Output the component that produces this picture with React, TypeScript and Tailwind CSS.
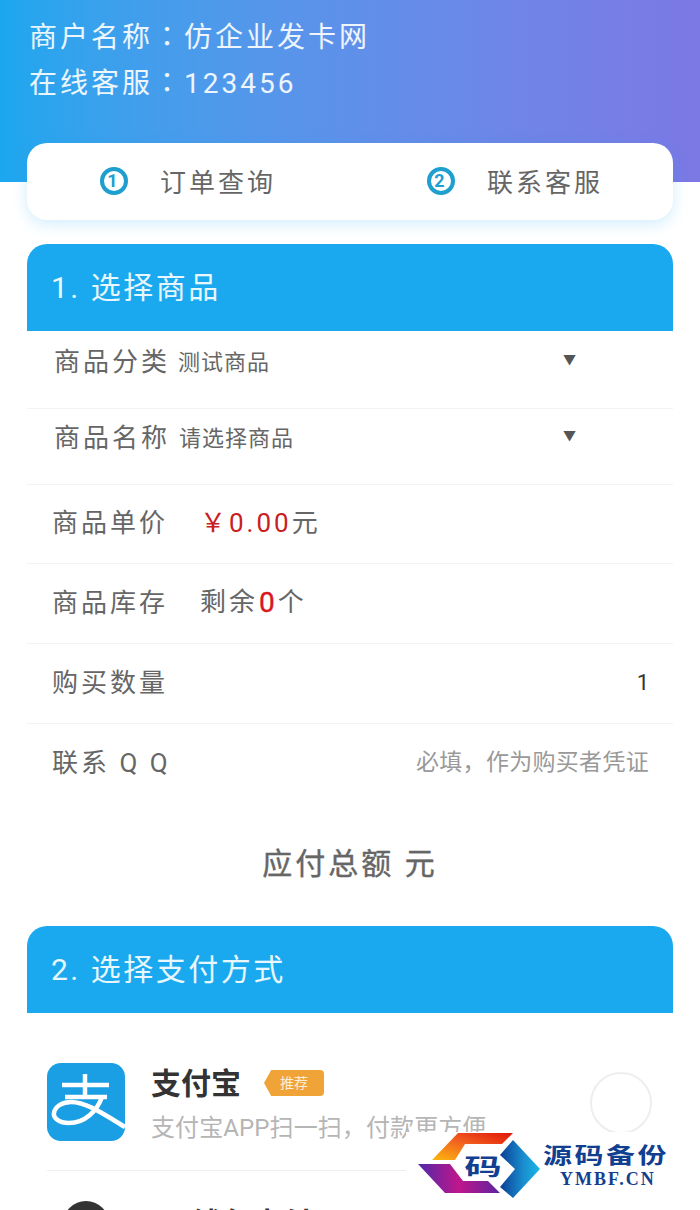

const cjk = "font-['Roboto','Noto_Sans_CJK_SC',sans-serif]";

function Row({ label, children, right, h }: { label: string; children?: React.ReactNode; right?: React.ReactNode; h: string }) {
  return (
    <div className={`${h} flex items-center pl-[25px] pr-[24px] pb-[2px] border-b border-[#f3f3f3] last:border-b-0 box-border`}>
      <span className="text-[26px] leading-[36px] tracking-[3px] text-[#666] w-[148px] shrink-0">{label}</span>
      <span className="flex-1 flex items-center text-[26px] tracking-[1px] text-[#666]">{children}</span>
      {right}
    </div>
  );
}

function SelectRow({ label, value, gap, h, pt }: { label: string; value: string; gap: string; h: string; pt: string }) {
  return (
    <div className={`${h} ${pt} flex items-start pl-[27px] pr-[96px] border-b border-[#f3f3f3] box-border`}>
      <span className="text-[26px] leading-[36px] tracking-[3px] text-[#666] shrink-0">{label}</span>
      <span className={`text-[22px] leading-[38px] tracking-[1px] text-[#666] flex-1 ${gap}`}>{value}</span>
      <span className="text-[13px] leading-[32px] text-[#555] -translate-x-[1px]">▼</span>
    </div>
  );
}

function Head({ children }: { children: React.ReactNode }) {
  return (
    <div className="h-[87px] bg-[#1aa9ee] rounded-t-[20px] flex items-center pl-[24px] text-[30px] tracking-[2.5px] text-white/90">
      {children}
    </div>
  );
}

function Num({ n }: { n: string }) {
  return (
    <span className="w-[28px] h-[28px] -mt-[2px] rounded-full border-[4px] border-[#1e9fcf] text-[#1e9fcf] flex items-center justify-center text-[18px] font-bold leading-none">
      {n}
    </span>
  );
}

function Alipay() {
  return (
    <svg width="78" height="78" viewBox="0 0 78 78" className="shrink-0">
      <rect width="78" height="78" rx="14" fill="#1a9ee4" />
      <g fill="none" stroke="#fff" strokeWidth="4.5" strokeLinecap="butt">
        <path d="M15 22H62" />
        <path d="M38 11V34" />
        <path d="M18 34H60" />
        <path d="M55 34C50 48 38 60 22 60C12 60 6 55 7 50C8 43 16 39 24 39C40 39 58 52 78 64" />
      </g>
    </svg>
  );
}

function Logo() {
  return (
    <div className="absolute left-[406px] top-[1132px] w-[294px] h-[78px] bg-white">
      <svg width="128" height="70" viewBox="0 0 128 70" className="absolute left-[12px] top-[-2px]">
        <defs>
          <linearGradient id="a" x1="0" y1="1" x2="1" y2="0">
            <stop offset="0" stopColor="#fcb90f" />
            <stop offset="0.5" stopColor="#f2621f" />
            <stop offset="1" stopColor="#e0140a" />
          </linearGradient>
          <linearGradient id="b" x1="0" y1="0" x2="1" y2="0">
            <stop offset="0" stopColor="#4f2aa8" />
            <stop offset="0.5" stopColor="#c0168c" />
            <stop offset="1" stopColor="#5a239e" />
          </linearGradient>
          <linearGradient id="c" x1="0" y1="0" x2="1" y2="0">
            <stop offset="0" stopColor="#0b3f96" />
            <stop offset="0.6" stopColor="#1a8fd0" />
            <stop offset="1" stopColor="#19b7e8" />
          </linearGradient>
        </defs>
        <polygon points="14,30 40,3 95,3 84,14 47,14 37,30" fill="url(#a)" />
        <polygon points="0,34 32,34 45,51 70,51 82,63 27,63" fill="url(#b)" />
        <polygon points="95,10 122,39 95,68 82,57 97,39 82,25" fill="url(#c)" />
      </svg>
      <span className="absolute left-[55px] top-[18px] w-[44px] text-center text-[30px] leading-[34px] font-bold text-[#123f8f] scale-x-125 scale-y-75 [text-shadow:1px_0_#fff,-1px_0_#fff,0_1px_#fff,0_-1px_#fff]">
        码
      </span>
      <span className="absolute left-[137px] top-[11px] text-[29px] leading-[24px] font-bold tracking-[2.5px] text-[#123f8f] whitespace-nowrap scale-y-75 origin-center">
        源码备份
      </span>
      <span className="absolute left-[154px] top-[37px] text-[18px] leading-[20px] font-bold tracking-[2px] text-[#123f8f] font-['Liberation_Serif',serif] whitespace-nowrap">
        YMBF.CN
      </span>
    </div>
  );
}

export default function App() {
  return (
    <div className={`relative w-[700px] h-[1210px] overflow-hidden bg-white ${cjk}`}>
      <div className="h-[182px] bg-gradient-to-r from-[#1aa7ee] to-[#7c78e4] pl-[29px] pt-[12px] text-[28px] leading-[46px] tracking-[3px] text-white/90">
        <div className="h-[46px]">
          商户名称<span className="font-['Noto_Sans_CJK_TC',sans-serif]">：</span>仿企业发卡网
        </div>
        <div className="h-[46px]">
          在线客服<span className="font-['Noto_Sans_CJK_TC',sans-serif]">：</span>123456
        </div>
      </div>
      <div className="mx-[27px] -mt-[39px] h-[77px] bg-white rounded-[20px] shadow-[0_4px_16px_rgba(26,167,238,0.2)] relative flex items-center">
        <div className="w-[327px] flex items-center pl-[73px] gap-[32px] text-[26px] tracking-[3px] text-[#666]">
          <Num n="1" /> <span className="pt-[4px]">订单查询</span>
        </div>
        <div className="flex items-center pl-[73px] gap-[32px] text-[26px] tracking-[3px] text-[#666]">
          <Num n="2" /> <span className="pt-[4px]">联系客服</span>
        </div>
      </div>

      <div className="mx-[27px] mt-[24px]">
        <Head>1. 选择商品</Head>
        <SelectRow label="商品分类" value="测试商品" gap="ml-[8px]" h="h-[78px]" pt="pt-[13px]" />
        <SelectRow label="商品名称" value="请选择商品" gap="ml-[9px]" h="h-[76px]" pt="pt-[11px]" />
        <Row label="商品单价" h="h-[79px]">
          <span className="text-[#c8201f] tracking-[3px]">￥0.00</span>
          <span>元</span>
        </Row>
        <Row label="商品库存" h="h-[80px]">
          <span className="tracking-[3px]">剩余</span>
          <span className="text-[#d8181c] text-[28px] ml-[1px] mr-[2px] [-webkit-text-stroke:0.4px_#d8181c]">0</span>
          <span>个</span>
        </Row>
        <Row label="购买数量" h="h-[80px]" right={<span className="text-[22px] text-[#333]">1</span>} />
        <Row label="联系 Q Q" h="h-[80px]" right={<span className="text-[23px] tracking-[0.3px] text-[#999]">必填，作为购买者凭证</span>} />
      </div>

      <div className="text-center text-[30px] leading-[44px] tracking-[3px] text-[#666] mt-[38px] [-webkit-text-stroke:0.4px_#666]">
        应付总额 元
      </div>

      <div className="mx-[27px] mt-[40px]">
        <Head>2. 选择支付方式</Head>
        <div className="pl-[20px] pt-[50px]">
          <div className="flex items-start border-b border-[#eee] h-[108px]">
            <Alipay />
            <div className="ml-[26px] flex-1">
              <div className="flex items-center h-[40px]">
                <span className="text-[30px] font-bold text-[#333]">支付宝</span>
                <span className="ml-[23px] h-[26px] w-[60px] bg-[#f0a437] rounded-[4px] flex items-center justify-center text-[14px] text-white/80 [clip-path:polygon(12%_0,100%_0,100%_100%,12%_100%,0_50%)]">
                  推荐
                </span>
              </div>
              <div className="text-[24px] leading-[32px] mt-[9px] tracking-[0.1px] text-[#b5b5b5] whitespace-nowrap">支付宝APP扫一扫，付款更方便</div>
            </div>
            <span className="w-[62px] h-[62px] rounded-full border-2 border-[#eee] mt-[9px] mr-[21px] shrink-0" />
          </div>
          <div className="flex items-start pt-[30px]">
            <span className="w-[46px] h-[46px] ml-[16px] rounded-full bg-[#333] shrink-0" />
            <span className="ml-[42px] text-[30px] font-bold text-[#333]">QQ钱包支付</span>
          </div>
        </div>
      </div>
      <Logo />
    </div>
  );
}
